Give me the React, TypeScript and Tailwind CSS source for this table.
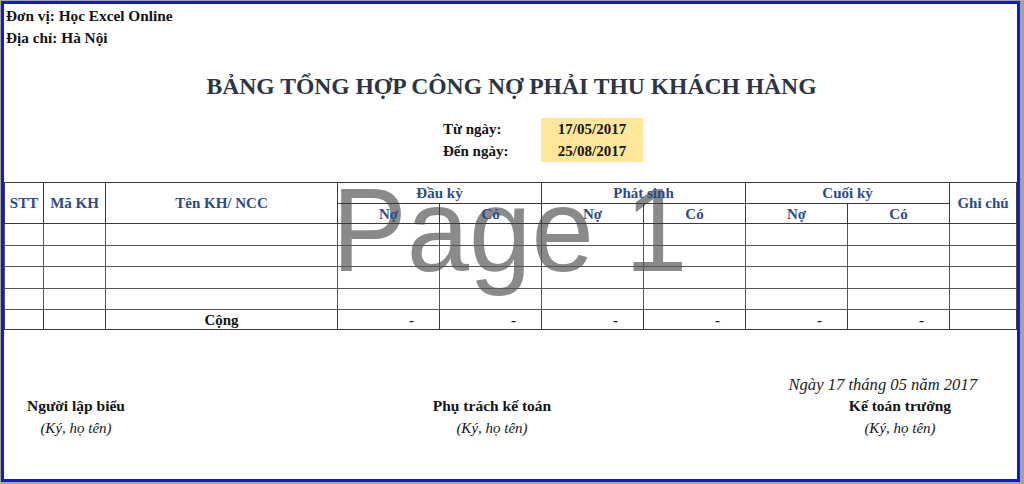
import React from 'react';

const serif = "font-['Liberation_Serif','Times_New_Roman',serif]";

const groups = ['Đầu kỳ', 'Phát sinh', 'Cuối kỳ'];
const bodyRows = [22, 21, 22, 21];

const Signer: React.FC<{ title: string }> = ({ title }) => (
  <div className="flex flex-col items-center">
    <div className="font-bold leading-[22px] text-[15.5px]">{title}</div>
    <div className="italic leading-[22px] text-[15px]">(Ký, họ tên)</div>
  </div>
);

const App: React.FC = () => {
  return (
    <div className={`w-[1024px] h-[484px] bg-[#a3a3a3] pt-[1px] pl-[1px] ${serif}`}>
      <div className="relative w-[1019px] h-[481px] bg-white border-[3px] border-[#1414ee] text-[#141414]">
        {/* watermark sits behind the table lines */}
        <div className="absolute left-[328px] top-[167px] origin-left scale-x-[0.95] text-[118px] leading-none text-[#8a8a8a] font-['Liberation_Sans',Arial,sans-serif] select-none">
          Page 1
        </div>

        <div className="relative z-10">
          <div className="pt-[1px] pl-[2px] text-[15.3px] font-bold leading-[22px]">
            <div>Đơn vị: Học Excel Online</div>
            <div>Địa chỉ: Hà Nội</div>
          </div>

          <h1 className="pt-[22px] pb-[17px] text-center text-[23.6px] leading-[30px] font-bold text-[#2a3547] pl-[2px]">
            BẢNG TỔNG HỢP CÔNG NỢ PHẢI THU KHÁCH HÀNG
          </h1>

          <div className="flex mb-[20px] text-[15px] font-bold leading-[22px]">
            <div className="w-[439px]" />
            <div className="w-[98px]">
              <div>Từ ngày:</div>
              <div>Đến ngày:</div>
            </div>
            <div className="w-[102px] bg-[#ffe699] text-center">
              <div>17/05/2017</div>
              <div>25/08/2017</div>
            </div>
          </div>

          <table className="w-[1012px] table-fixed border-collapse text-[15px]">
            <colgroup>
              <col className="w-[39px]" />
              <col className="w-[62px]" />
              <col className="w-[232px]" />
              {Array(6).fill(0).map((_, i) => (
                <col key={i} className="w-[102px]" />
              ))}
              <col className="w-[67px]" />
            </colgroup>
            <thead className="font-bold text-[#2b4a8b]">
              <tr className="h-[21px]">
                <th rowSpan={2} className="border border-[#3a3a3a] font-bold">STT</th>
                <th rowSpan={2} className="border border-[#3a3a3a] font-bold">Mã KH</th>
                <th rowSpan={2} className="border border-[#3a3a3a] font-bold">Tên KH/ NCC</th>
                {groups.map((g) => (
                  <th key={g} colSpan={2} className="border border-[#3a3a3a] font-bold leading-[18px]">
                    {g}
                  </th>
                ))}
                <th rowSpan={2} className="border border-[#3a3a3a] font-bold">Ghi chú</th>
              </tr>
              <tr className="h-[20px]">
                {Array(3).fill(0).map((_, i) => (
                  <React.Fragment key={i}>
                    <th className="border border-[#3a3a3a] font-bold leading-[18px]">Nợ</th>
                    <th className="border border-[#3a3a3a] font-bold leading-[18px]">Có</th>
                  </React.Fragment>
                ))}
              </tr>
            </thead>
            <tbody>
              {bodyRows.map((h, r) => (
                <tr key={r} style={{ height: h }}>
                  {Array(10).fill(0).map((_, c) => (
                    <td key={c} className="border border-[#555]" />
                  ))}
                </tr>
              ))}
              <tr className="h-[20px] font-bold leading-[18px]">
                <td className="border border-[#3a3a3a]" />
                <td className="border border-[#3a3a3a]" />
                <td className="border border-[#3a3a3a] text-center">Cộng</td>
                {Array(6).fill(0).map((_, i) => (
                  <td key={i} className="border border-[#3a3a3a] text-right pr-[25px]">-</td>
                ))}
                <td className="border border-[#3a3a3a]" />
              </tr>
            </tbody>
          </table>

          <div className="mt-[44px] pr-[40px] text-right italic text-[16.6px] leading-[22px] text-[#222]">
            Ngày 17 tháng 05 năm 2017
          </div>
          <div className="grid grid-cols-[144px_688px_128px] -mt-[1px]">
            <Signer title="Người lập biểu" />
            <Signer title="Phụ trách kế toán" />
            <Signer title="Kế toán trưởng" />
          </div>
        </div>
      </div>
    </div>
  );
};

export default App;
